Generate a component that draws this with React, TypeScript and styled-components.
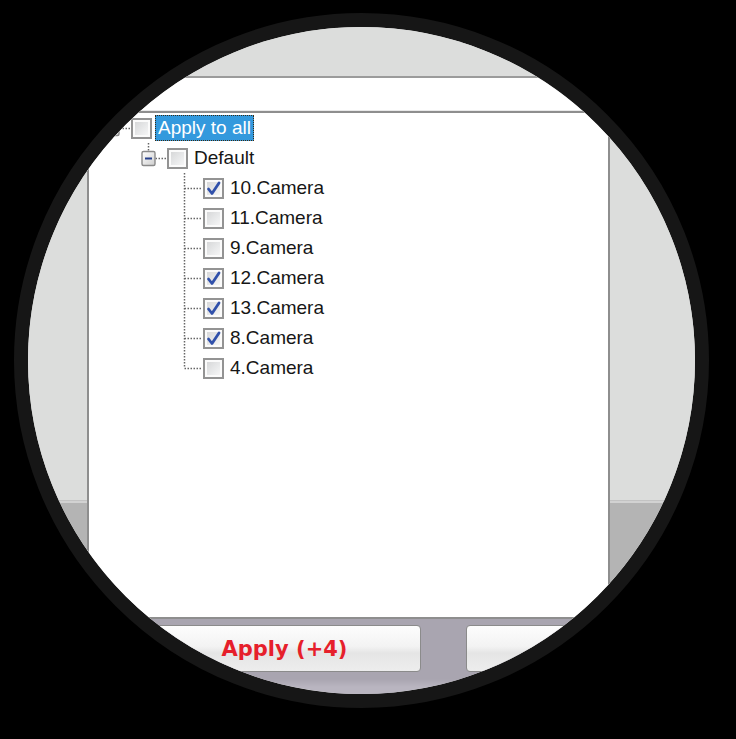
import React from 'react';
import styled, { createGlobalStyle } from 'styled-components';

const GlobalStyle = createGlobalStyle`
  html, body {
    margin: 0;
    padding: 0;
    background: #000;
  }
  body {
    width: 736px;
    height: 739px;
    overflow: hidden;
    font-family: "Liberation Sans", Arial, sans-serif;
  }
`;

const Stage = styled.div`
  width: 736px;
  height: 739px;
  box-sizing: border-box;
  padding: 13px 0 0 14px;
  background: #000;
`;

// magnifier lens: dark ring round a circular crop of the dialog
const Lens = styled.div`
  width: 695px;
  height: 695px;
  box-sizing: border-box;
  border: 14px solid #161616;
  border-radius: 50%;
  overflow: hidden;
  background: #dcdddc;
`;

const Dialog = styled.div`
  width: 667px;
  display: flex;
  flex-direction: column;
`;

const TitleStrip = styled.div`
  height: 49px;
  background: #dcdddc;
  border-bottom: 2px solid #9b9b9b;
`;

const SearchBand = styled.div`
  height: 32px;
  background: #fff;
  border-bottom: 1px solid #e9e9e9;
`;

const Body = styled.div`
  display: flex;
  height: 508px;
`;

const Gutter = styled.div<{ $width?: number }>`
  display: flex;
  flex-direction: column;
  width: ${p => (p.$width ? `${p.$width}px` : 'auto')};
  flex: ${p => (p.$width ? '0 0 auto' : '1')};
`;

const GutterPane = styled.div<{ $lower?: boolean }>`
  height: ${p => (p.$lower ? 'auto' : '389px')};
  flex: ${p => (p.$lower ? '1' : '0 0 auto')};
  background: ${p => (p.$lower ? '#b4b4b4' : '#dcdddc')};
`;

const GutterRule = styled.div`
  height: 2px;
  background: #d2d2d2;
  border-top: 1px solid #c3c3c3;
`;

const TreeBox = styled.div`
  width: 523px;
  box-sizing: border-box;
  border: 2px solid #8e8e8e;
  background: #fff;
  padding-left: 8px;
`;

const Row = styled.div<{ $level: number }>`
  display: flex;
  align-items: center;
  height: 30px;
  padding-left: ${p => p.$level * 36}px;
`;

const Lines = styled.svg`
  flex: 0 0 auto;
  display: block;
`;

const Check = styled.span`
  flex: 0 0 auto;
  width: 21px;
  height: 21px;
  box-sizing: border-box;
  border: 2px solid #939393;
  box-shadow: inset 0 0 0 2px #fbfbfb;
  background: linear-gradient(135deg, #d2d3d4 0%, #e8e9ea 55%, #fafafa 100%);
  display: flex;
  align-items: center;
  justify-content: center;
`;

const Label = styled.span<{ $selected?: boolean }>`
  margin-left: 3px;
  padding: 0 2px;
  height: 24px;
  line-height: 24px;
  font-size: 19px;
  white-space: nowrap;
  color: ${p => (p.$selected ? '#fff' : '#161616')};
  background: ${p => (p.$selected ? '#3399dd' : 'transparent')};
  border: 1px dotted ${p => (p.$selected ? '#3b2a12' : 'transparent')};
`;

const Footer = styled.div`
  display: flex;
  gap: 45px;
  padding: 6px 0 0 120px;
  height: 180px;
  background: linear-gradient(#a9a5b0 0, #a9a5b0 60px, #b9b5c0 68px, #b9b5c0 100%);
`;

const Button = styled.button`
  flex: 0 0 auto;
  width: 273px;
  height: 47px;
  box-sizing: border-box;
  border: 1px solid #8b8b8b;
  border-radius: 4px;
  background: linear-gradient(#fdfdfd 0%, #f3f3f3 45%, #e5e5e5 60%, #ededed 100%);
  font-family: "DejaVu Sans", Verdana, sans-serif;
  font-weight: bold;
  font-size: 21px;
  color: #e61f2b;
  padding: 0;
`;

type Node = {
  label: string;
  level: number;
  checked?: boolean;
  selected?: boolean;
  toggle?: boolean;
  lineAbove?: boolean;
  lineBelow?: boolean;
};

const nodes: Node[] = [
  { label: 'Apply to all', level: 0, toggle: true, selected: true },
  { label: 'Default', level: 1, toggle: true, lineAbove: true },
  { label: '10.Camera', level: 2, checked: true, lineAbove: true, lineBelow: true },
  { label: '11.Camera', level: 2, lineAbove: true, lineBelow: true },
  { label: '9.Camera', level: 2, lineAbove: true, lineBelow: true },
  { label: '12.Camera', level: 2, checked: true, lineAbove: true, lineBelow: true },
  { label: '13.Camera', level: 2, checked: true, lineAbove: true, lineBelow: true },
  { label: '8.Camera', level: 2, checked: true, lineAbove: true, lineBelow: true },
  { label: '4.Camera', level: 2, lineAbove: true },
];

const DOT = { stroke: '#666', strokeWidth: 1.5, strokeDasharray: '1.5 1.5' };

const Connector = ({ node }: { node: Node }) => {
  const cx = 15.5;
  const top = node.toggle ? 8 : 15;
  const start = node.toggle ? 22.5 : cx;
  return (
    <Lines width={34} height={30} viewBox="0 0 34 30">
      {node.lineAbove && <line x1={cx} y1={0} x2={cx} y2={top} {...DOT} />}
      {node.lineBelow && <line x1={cx} y1={15} x2={cx} y2={30} {...DOT} />}
      <line x1={start} y1={15.5} x2={33} y2={15.5} {...DOT} />
      {node.toggle && (
        <g>
          <defs>
            <linearGradient id="tg" x1="0" y1="0" x2="1" y2="1">
              <stop offset="0" stopColor="#ffffff" />
              <stop offset="1" stopColor="#cfcfcf" />
            </linearGradient>
          </defs>
          <rect x={9} y={8.5} width={13} height={14} rx={1.5} fill="url(#tg)" stroke="#8a8a8a" strokeWidth={1.4} />
          <line x1={12} y1={15.5} x2={19} y2={15.5} stroke="#26408c" strokeWidth={2} />
        </g>
      )}
    </Lines>
  );
};

const CheckMark = () => (
  <svg width={15} height={15} viewBox="0 0 15 15">
    <path d="M2.5 8 L6 12.5 L13 2" fill="none" stroke="#3050aa" strokeWidth={2.8} strokeLinecap="round" strokeLinejoin="round" />
  </svg>
);

const TreeRow = ({ node }: { node: Node }) => (
  <Row $level={node.level}>
    <Connector node={node} />
    <Check>{node.checked && <CheckMark />}</Check>
    <Label $selected={node.selected}>{node.label}</Label>
  </Row>
);

export default function App() {
  return (
    <Stage>
      <GlobalStyle />
      <Lens>
        <Dialog>
          <TitleStrip />
          <SearchBand />
          <Body>
            <Gutter $width={59}>
              <GutterPane />
              <GutterRule />
              <GutterPane $lower />
            </Gutter>
            <TreeBox>
              {nodes.map(n => (
                <TreeRow key={n.label} node={n} />
              ))}
            </TreeBox>
            <Gutter>
              <GutterPane />
              <GutterRule />
              <GutterPane $lower />
            </Gutter>
          </Body>
          <Footer>
            <Button>Apply (+4)</Button>
            <Button />
          </Footer>
        </Dialog>
      </Lens>
    </Stage>
  );
}
